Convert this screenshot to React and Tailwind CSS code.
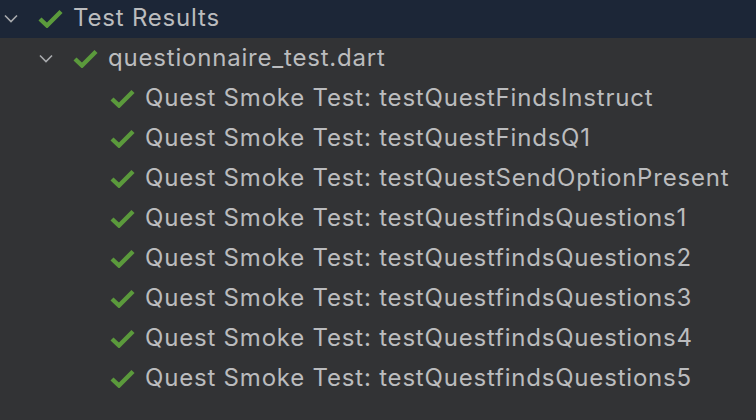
import React from "react";

const Check = () => (
  <svg width="25" height="19" viewBox="0 0 25 19" className="shrink-0">
    <path d="M2 10 L9 16.5 L23 2.5" fill="none" stroke="#5b9a3c" strokeWidth="4.4" strokeLinecap="butt" strokeLinejoin="miter" />
  </svg>
);

const Chevron = () => (
  <svg width="14" height="9" viewBox="0 0 14 9" className="shrink-0">
    <path d="M1 1.5 L7 7.5 L13 1.5" fill="none" stroke="#a9abae" strokeWidth="1.6" />
  </svg>
);

const tests = [
  "testQuestFindsInstruct",
  "testQuestFindsQ1",
  "testQuestSendOptionPresent",
  "testQuestfindsQuestions1",
  "testQuestfindsQuestions2",
  "testQuestfindsQuestions3",
  "testQuestfindsQuestions4",
  "testQuestfindsQuestions5",
];

const App = () => {
  return (
    <div
      className="w-[756px] h-[420px] overflow-hidden bg-[#323335] text-[#bbbcbe] text-[24px] tracking-[0.8px]"
      style={{ fontFamily: "Inter, 'Noto Sans', sans-serif" }}
    >
      <div className="-mt-[2px]">
        <div className="h-[40px] flex items-center bg-[#1c2637]">
          <div className="w-[22px] flex justify-center">
            <Chevron />
          </div>
          <div className="ml-[16px]">
            <Check />
          </div>
          <span className="ml-[10px]">Test Results</span>
        </div>
        <div className="h-[40px] flex items-center pl-[35px]">
          <div className="w-[22px] flex justify-center">
            <Chevron />
          </div>
          <div className="ml-[16px]">
            <Check />
          </div>
          <span className="ml-[10px]">questionnaire_test.dart</span>
        </div>
        {tests.map((t) => (
          <div key={t} className="h-[40px] flex items-center pl-[110px]">
            <Check />
            <span className="ml-[10px]">Quest Smoke Test: {t}</span>
          </div>
        ))}
      </div>
    </div>
  );
};

export default App;
